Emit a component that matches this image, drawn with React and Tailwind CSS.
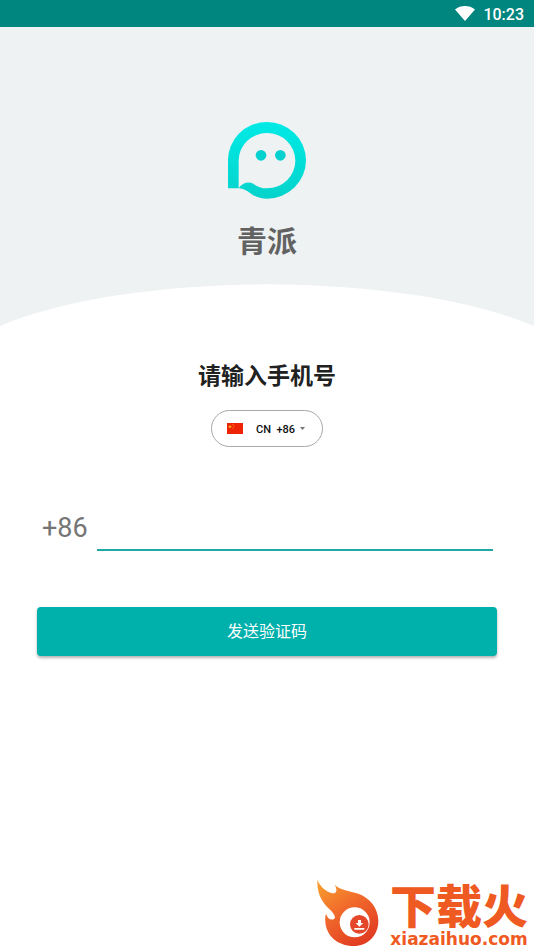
import React from "react";

function StatusBar() {
  return (
    <div className="flex h-[27px] items-center justify-end gap-2 bg-[#00867e] pr-[10px] text-white">
      <svg className="h-[15px] w-5" viewBox="0 0 20 15" aria-hidden="true">
        <path d="M10 15 L0 3.4 C5.6 -1.1 14.4 -1.1 20 3.4 Z" fill="#fff" />
      </svg>
      <time className="pt-[2px] font-[Roboto,sans-serif] text-base font-medium">10:23</time>
    </div>
  );
}

function GhostLogo() {
  return (
    <svg className="h-[77px] w-[78px]" viewBox="33 37 234 231" aria-hidden="true">
      <defs>
        <linearGradient id="ghost" x1="0" y1="0" x2="0" y2="1">
          <stop offset="0" stopColor="#00eae6" />
          <stop offset="1" stopColor="#05d3cb" />
        </linearGradient>
      </defs>
      <path
        fill="url(#ghost)"
        fillRule="evenodd"
        d="M33 236 V154 A117 115 0 1 1 150 267 C128 267 112 260 98 249 C88 242 79 237 66 236 Z M65 236 V154 A85 83 0 1 1 150 236 C132 236 120 230 109 222 C94 214 76 219 65 236 Z"
      />
      <circle cx="132" cy="137" r="16" fill="#05d2cf" />
      <circle cx="190" cy="137" r="16" fill="#05d2cf" />
    </svg>
  );
}

function ChinaFlag() {
  return (
    <svg className="h-[11px] w-4" viewBox="0 0 16 11" role="img" aria-label="国家代码">
      <rect width="16" height="11" fill="#ee2306" />
      <path d="M3 1.5 L3.5 3 H5 L3.8 3.9 L4.2 5.4 L3 4.5 L1.8 5.4 L2.2 3.9 L1 3 H2.5 Z" fill="#ffb01a" />
      <g fill="#ff901a">
        <circle cx="5.8" cy="1.4" r=".5" />
        <circle cx="6.8" cy="2.6" r=".5" />
        <circle cx="6.8" cy="4.1" r=".5" />
        <circle cx="5.8" cy="5.2" r=".5" />
      </g>
    </svg>
  );
}

function FlameMark() {
  return (
    <svg className="h-[66px] w-[62px] shrink-0" viewBox="50 27 186 198" aria-hidden="true">
      <defs>
        <linearGradient id="flame" x1="0" y1="0" x2=".6" y2="1">
          <stop offset="0" stopColor="#f9a32f" />
          <stop offset=".5" stopColor="#f16a2b" />
          <stop offset="1" stopColor="#e23f22" />
        </linearGradient>
      </defs>
      <path
        fill="url(#flame)"
        d="M51 27 C59 46 76 62 96 67 C109 68 112 57 103 41 C121 58 146 59 174 68 C208 80 234 111 234 150 C234 194 202 225 160 225 C110 225 78 193 75 153 C74 141 75 134 77 128 C82 143 91 149 101 144 C108 139 101 129 91 118 C74 101 49 78 51 27 Z"
      />
      <circle cx="163" cy="154" r="45" fill="#fff" />
      <circle cx="177" cy="160" r="28" fill="#e5472a" />
      <path d="M173 147 H182 V156 H189 L177 167 L166 156 H173 Z M162 171 H192 V176 H162 Z" fill="#fff" />
    </svg>
  );
}

export default function App() {
  return (
    <div className="flex min-h-screen flex-col bg-white font-[Roboto,'Noto_Sans_CJK_SC',sans-serif]">
      <StatusBar />
      <header className="flex flex-col items-center bg-[#eef2f3] pt-[95px]">
        <GhostLogo />
        <h1 className="mt-[23px] text-3xl leading-10 font-bold text-[#626262]">青派</h1>
        <svg className="mt-[22px] block w-full" viewBox="0 0 534 42" aria-hidden="true">
          <path d="M0 42 A330 101 0 0 1 534 42 Z" fill="#fff" />
        </svg>
      </header>

      <main className="flex flex-col px-[37px] pt-[35px]">
        <h2 className="text-center text-[23px] leading-8 font-bold text-[#212121]">请输入手机号</h2>

        <div className="mt-[17px] flex h-[37px] w-28 items-center self-center rounded-full border border-[#a8a8a8] pl-[15px]">
          <label htmlFor="country" className="shrink-0">
            <ChinaFlag />
          </label>
          <select
            id="country"
            defaultValue="86"
            className="ml-[13px] h-5 w-11 appearance-none bg-transparent pt-[3px] text-[11px] font-medium text-[#111] outline-none"
          >
            <option value="86">CN&nbsp; +86</option>
          </select>
          <svg className="h-[3px] w-[5px]" viewBox="0 0 5 3" aria-hidden="true">
            <path d="M0 0 H5 L2.5 3 Z" fill="#777" />
          </svg>
        </div>

        <div className="mt-[61px] flex h-11 items-start pr-1 pl-[5px]">
          <label htmlFor="phone" className="w-[55px] text-[27px] leading-10 text-[#757575]">+86</label>
          <input
            id="phone"
            type="tel"
            className="h-[43px] min-w-0 flex-1 border-b-2 border-[#1fa9a2] bg-transparent text-[27px] text-[#212121] outline-none"
          />
        </div>

        <button
          type="button"
          className="mt-[55px] h-[49px] rounded bg-[#00b0ab] pt-px text-base text-white shadow-[0_2px_3px_rgba(0,0,0,0.3)]"
        >
          发送验证码
        </button>
      </main>

      <footer className="mt-auto flex justify-end pr-[6px]">
        <FlameMark />
        <div className="flex flex-col items-center gap-1 pb-[2px] pl-[11px]">
          <span className="font-['Noto_Sans_CJK_SC',sans-serif] text-[46px] leading-[47px] font-black text-[#ee5a22]">下载火</span>
          <span className="font-['DejaVu_Sans',sans-serif] text-[17px] leading-4 font-bold text-[#ee5a22]">xiazaihuo.com</span>
        </div>
      </footer>
    </div>
  );
}
